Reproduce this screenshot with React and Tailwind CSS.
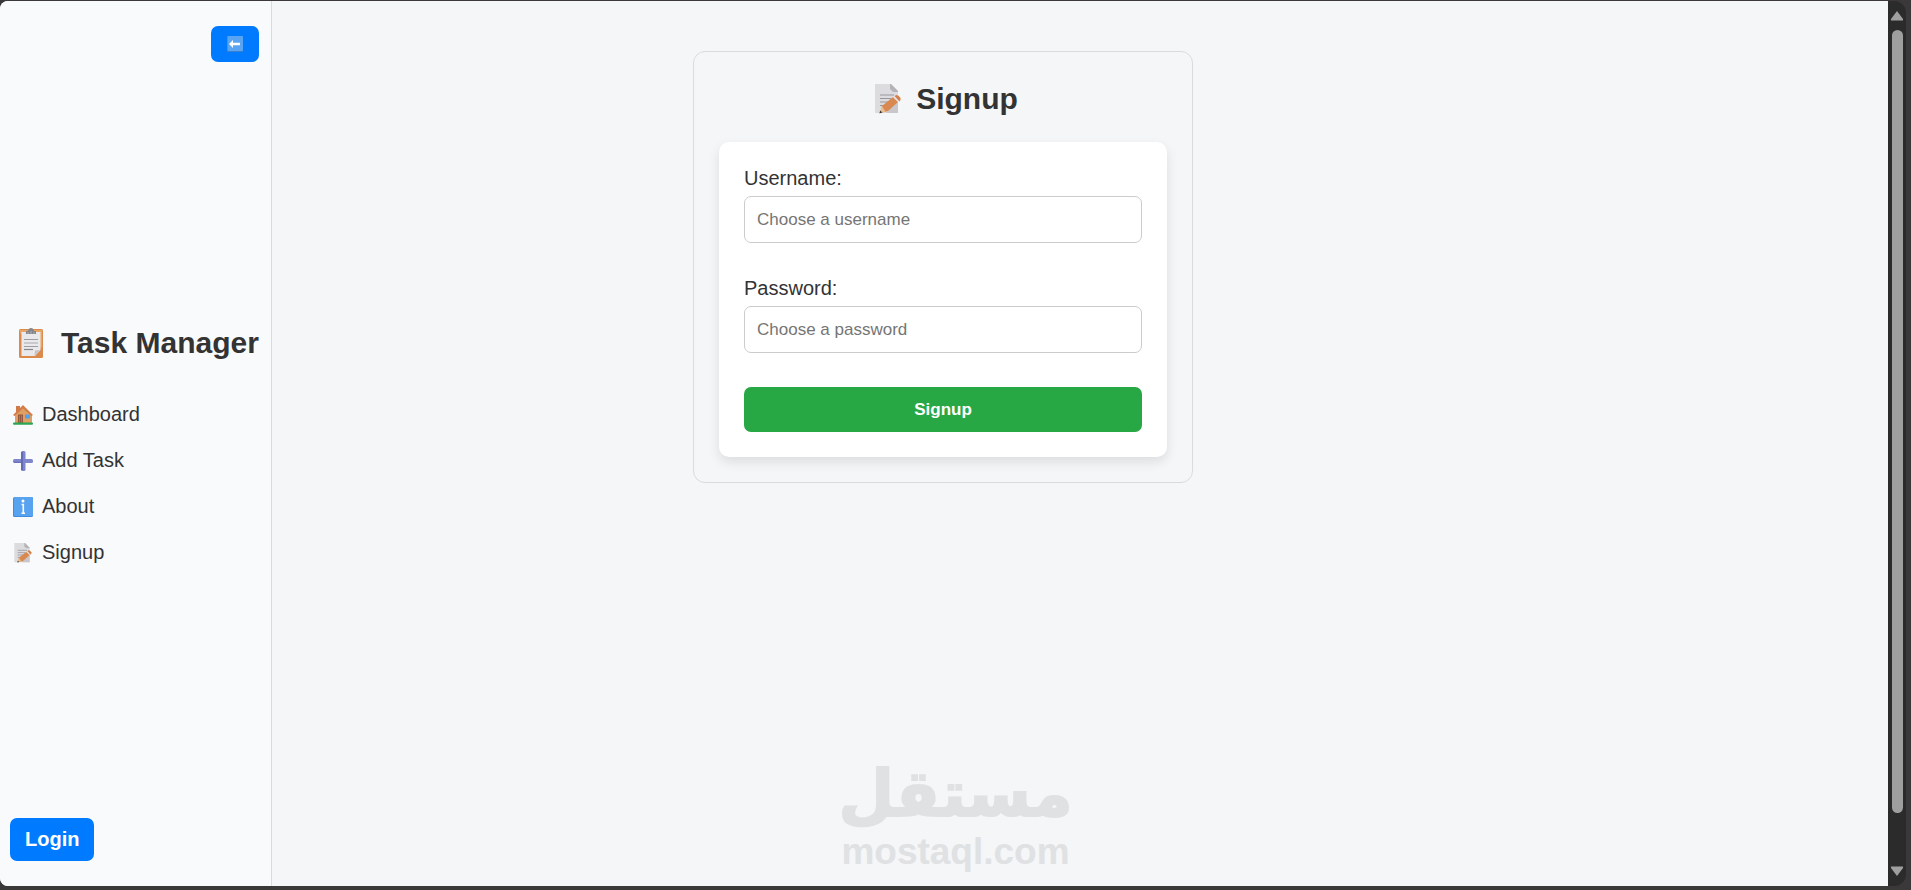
import React, { useState } from 'react';

const MemoIcon = ({ className }) => (
    <svg viewBox="0 0 28 30" className={className} aria-hidden="true">
        <path d="M1 0h16l7 7v22H1z" fill="#dcdcde" />
        <path d="M16 0h1l7 7v1h-5l-3-3z" fill="#b5b3b7" />
        <path d="M12 29h12V14z" fill="#c9c7ca" />
        <path d="M6 11h14M6 14.5h11M6 18h9M6 21.5h6" stroke="#98969c" strokeWidth="1.2" />
        <path d="M8 22L19 13l5 5-10 9-7 2z" fill="#d98850" />
        <path d="M19 13l2-1 4 4-1 2z" fill="#e6e4e6" />
        <path d="M20.500 12l2-1q2 0 4 3 .5 2-1 3.500z" fill="#d27f4c" />
        <path d="M8 22l-2.500 7 6-1.500z" fill="#e9bd8c" />
        <path d="M6.300 26.500l-.9 2.900 2.800-.8z" fill="#3b3638" />
    </svg>
);

const ClipboardIcon = ({ className }) => (
    <svg viewBox="0 0 24 30" className={className} aria-hidden="true">
        <rect x="0" y="1" width="24" height="29" rx="1.500" fill="#dc8a4c" />
        <path d="M1 2h22v18L1 5z" fill="#e8a766" />
        <path d="M2.500 4h19v18l-5.500 6H2.500z" fill="#e9e9ec" />
        <path d="M15.500 28l.5-5.500 5-.5z" fill="#c3c2c8" />
        <path d="M7 6V3h2q.5-3 3-3t3 3h2v3z" fill="#85868b" />
        <path d="M9 4v2M12 3v3M15 4v2" stroke="#aeb0b5" />
        <path d="M5 11.500h14M5 18.500h14" stroke="#9b9da3" strokeWidth="1.200" />
        <path d="M5 15h14" stroke="#bdbec3" strokeWidth="1.500" />
        <path d="M5 21.500h9" stroke="#85878d" strokeWidth="1.200" />
    </svg>
);

const HomeIcon = ({ className }) => (
    <svg viewBox="0 0 20 20" className={className} aria-hidden="true">
        <path d="M3 1h4v7H3z" fill="#cf7a49" />
        <path d="M2 9l8-7 9 8v8H2z" fill="#e0a063" />
        <path d="M0 10L10 0l10 10-1.500 1L10 3.500 1.500 11z" fill="#d37c48" />
        <path d="M5 9.500h5V18H5z" fill="#93573f" />
        <path d="M6.500 10.500v7M8.500 10.500v7" stroke="#b37754" />
        <rect x="12" y="9.500" width="5" height="4" fill="#4da3ee" />
        <rect y="17.500" width="20" height="2.200" rx="1" fill="#2ba653" />
    </svg>
);

const PlusIcon = ({ className }) => (
    <svg viewBox="0 0 20 20" className={className} aria-hidden="true">
        <rect x="0" y="8" width="20" height="4" rx="1.500" fill="#7f86cb" />
        <rect x="8" y="0" width="4.500" height="20" rx="1.500" fill="#7f86cb" />
        <path d="M9 1v18" stroke="#4f5ba8" strokeWidth="1.200" />
        <path d="M1 11.300h7" stroke="#6870bb" strokeWidth="1.200" />
    </svg>
);

const InfoIcon = ({ className }) => (
    <svg viewBox="0 0 20 20" className={className} aria-hidden="true">
        <rect width="20" height="20" rx="1.500" fill="#3f8cda" />
        <rect x="1" y="0" width="19" height="19" rx="1" fill="#57a3ef" />
        <circle cx="10" cy="4" r="1.500" fill="#fff" />
        <path d="M8.500 7.500H10.300v8.500M8.500 16.200h3.500" stroke="#fff" strokeWidth="1.600" fill="none" />
    </svg>
);

const BackIcon = ({ className }) => (
    <svg viewBox="0 0 16 16" className={className} aria-hidden="true">
        <rect width="16" height="16" rx="1" fill="#3a80cc" />
        <rect x="0.500" width="15.500" height="15" rx="1" fill="#5aa5f1" />
        <path d="M2 8l4-4v2.800h7v2.400H6V12z" fill="#fff" />
    </svg>
);

const navItems = [
    { label: 'Dashboard', icon: HomeIcon },
    { label: 'Add Task', icon: PlusIcon },
    { label: 'About', icon: InfoIcon },
    { label: 'Signup', icon: MemoIcon },
];

const Sidebar = () => (
    <aside className="w-[272px] shrink-0 flex flex-col justify-between px-[10px] py-[25px] bg-[#f9fafc] border-r border-[#d9dbde]">
        <button
            aria-label="Collapse sidebar"
            className="self-end mr-[2px] w-12 h-9 flex items-center justify-center rounded-[7px] bg-[#007bff]"
        >
            <BackIcon className="w-4 h-4" />
        </button>

        <div className="pt-[10px]">
            <h2 className="flex items-center gap-[18px] pl-[9px] text-[30px] leading-[34px] font-bold whitespace-nowrap">
                <ClipboardIcon className="w-6 h-[30px] shrink-0" />
                Task Manager
            </h2>
            <nav className="mt-[43px]">
                <ul className="flex flex-col gap-[23px]">
                    {navItems.map(({ label, icon: Icon }) => (
                        <li key={label}>
                            <a href="#" className="flex items-center gap-[9px] pl-[3px] text-[20px] leading-[23px]">
                                <Icon className="w-5 h-5" />
                                {label}
                            </a>
                        </li>
                    ))}
                </ul>
            </nav>
        </div>

        <button className="self-start px-[15px] py-[10px] rounded-[7px] bg-[#007bff] text-white text-[20px] leading-[23px] font-bold">
            Login
        </button>
    </aside>
);

const Field = ({ id, label, type, placeholder, value, onChange }) => (
    <div className="mb-[34px]">
        <label htmlFor={id} className="block mb-[6px] text-[20px] leading-[23px]">
            {label}
        </label>
        <input
            id={id}
            type={type}
            value={value}
            onChange={(e) => onChange(e.target.value)}
            placeholder={placeholder}
            className="block w-full h-[47px] px-3 rounded-[7px] border border-[#cccccc] bg-white text-[17px] placeholder:text-[#757575]"
        />
    </div>
);

const SignupCard = () => {
    const [username, setUsername] = useState('');
    const [password, setPassword] = useState('');

    return (
        <section className="w-full max-w-[500px] p-[25px] rounded-xl border border-[#d9dbde]">
            <h1 className="flex items-center justify-center gap-[14px] pt-1 pl-[6px] mb-[25px] text-[30px] leading-9 font-bold">
                <MemoIcon className="w-7 h-[30px]" />
                Signup
            </h1>
            <form
                onSubmit={(e) => e.preventDefault()}
                className="p-[25px] rounded-[10px] bg-white shadow-[0_5px_12px_rgba(0,0,0,0.1)]"
            >
                <Field
                    id="username"
                    label="Username:"
                    type="text"
                    placeholder="Choose a username"
                    value={username}
                    onChange={setUsername}
                />
                <Field
                    id="password"
                    label="Password:"
                    type="password"
                    placeholder="Choose a password"
                    value={password}
                    onChange={setPassword}
                />
                <button type="submit" className="w-full h-[45px] rounded-[7px] bg-[#28a745] text-white text-[17px] font-bold">
                    Signup
                </button>
            </form>
        </section>
    );
};

const Scrollbar = () => (
    <div className="w-[18px] shrink-0 flex flex-col items-center py-[10px] bg-[#2b2b2b] rounded-r-xl" aria-hidden="true">
        <svg viewBox="0 0 12 10" className="w-3 h-[10px]">
            <path d="M6 0l6 8v1.500H0V8z" fill="#9f9f9f" />
        </svg>
        <div className="grow mt-[9px] mb-[53px] w-[11px] rounded-full bg-[#9f9f9f]" />
        <svg viewBox="0 0 12 10" className="w-3 h-[10px]">
            <path d="M6 10l6-8V.5H0V2z" fill="#9f9f9f" />
        </svg>
    </div>
);

// Faded brand mark that floats over the page
const Watermark = () => (
    <div className="absolute bottom-[17px] inset-x-0 flex flex-col items-center text-[#dfe1e3] font-bold pointer-events-none">
        <span
            dir="rtl"
            lang="ar"
            className="font-['DejaVu_Sans',sans-serif] text-[64px] leading-[74px] [-webkit-text-stroke:2px_#dfe1e3]"
        >
            مستقل
        </span>
        <span className="text-[37px] leading-[42px]">mostaql.com</span>
    </div>
);

const App = () => {
    return (
        <div className="relative min-h-screen flex pt-px pb-1 pr-[5px] bg-[#3a3839] text-[#333333] font-['Liberation_Sans',Arial,sans-serif]">
            <div className="grow flex rounded-l-lg overflow-hidden bg-[#f4f6f8]">
                <Sidebar />
                <main className="grow flex justify-center items-start pt-[50px] pr-[274px]">
                    <SignupCard />
                </main>
            </div>
            <Scrollbar />
            <Watermark />
        </div>
    );
};

export default App;
